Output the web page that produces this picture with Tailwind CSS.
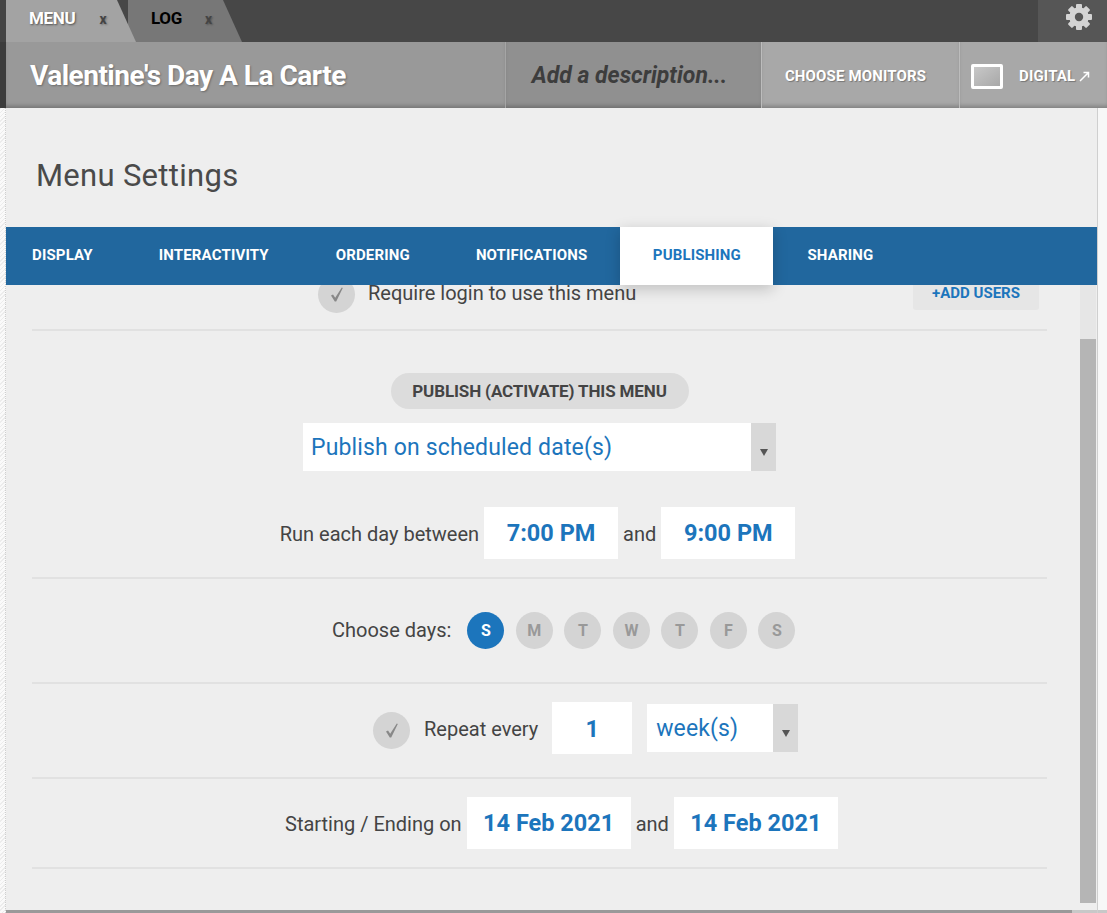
<!DOCTYPE html>
<html lang="en">
<head>
  <meta charset="UTF-8" />
  <title>Menu Settings</title>
  <script src="https://cdn.jsdelivr.net/npm/@tailwindcss/browser@4"></script>
</head>
<body class="bg-[#f7f7f7] font-['Roboto',sans-serif] overflow-hidden">
  <div class="w-[1107px] h-[913px] flex flex-col overflow-hidden">

    <!-- tab strip -->
    <div class="relative h-[42px] bg-[#474747] shrink-0 flex justify-end">
      <div class="absolute left-0 top-0 w-[6px] h-[42px] bg-[#444]"></div>
      <div class="absolute left-[128px] top-0 w-[114px] h-[42px] bg-[#777] [clip-path:polygon(0_0,95px_0,114px_42px,0_42px)] flex items-center pb-[4px] text-[17px] font-bold text-black">
        <span class="ml-[23px] tracking-[-0.3px]">LOG</span>
        <span class="ml-[23px] text-[14px] text-[#444] [text-shadow:1px_1px_2px_rgba(0,0,0,0.3)]">x</span>
      </div>
      <div class="absolute left-[6px] top-0 w-[130px] h-[42px] bg-[#a3a3a3] [clip-path:polygon(0_0,111px_0,130px_42px,0_42px)] flex items-center pb-[4px] text-[17px] font-bold text-white">
        <span class="ml-[23px] tracking-[-0.3px] [text-shadow:1px_1px_2px_rgba(0,0,0,0.5)]">MENU</span>
        <span class="ml-[24px] text-[14px] text-[#444] [text-shadow:1px_1px_2px_rgba(0,0,0,0.3)]">x</span>
      </div>
      <div class="w-[69px] bg-[#565656] flex items-center justify-center pb-[8px] pl-[13px]">
        <svg class="w-[28px] h-[28px]" viewBox="0 0 28 28" fill="#d4d4d4">
          <rect x="11" y="1" width="6" height="26" rx="1" />
          <rect x="11" y="1" width="6" height="26" rx="1" transform="rotate(45 14 14)" />
          <rect x="11" y="1" width="6" height="26" rx="1" transform="rotate(90 14 14)" />
          <rect x="11" y="1" width="6" height="26" rx="1" transform="rotate(135 14 14)" />
          <circle cx="14" cy="14" r="7" fill="none" stroke="#d4d4d4" stroke-width="5.5" />
          <circle cx="14" cy="14" r="4.2" fill="#565656" />
        </svg>
      </div>
    </div>

    <!-- menu header -->
    <div class="h-[66px] shrink-0 flex bg-[#3c3c3c] pl-[6px]">
      <div class="w-[499px] bg-[#999] shadow-[inset_0_-4px_4px_-2px_rgba(0,0,0,0.25)] flex items-center pl-[24px] pt-[1px] text-[28px] font-bold text-white tracking-[-0.5px] [text-shadow:1px_1px_2px_rgba(0,0,0,0.3)]">Valentine's Day A La Carte</div>
      <div class="w-[256px] bg-[#909090] border-l border-[#a5a5a5] shadow-[inset_0_-4px_4px_-2px_rgba(0,0,0,0.25)] flex items-center justify-center pr-[8px] pt-[2px] text-[23px] font-bold italic text-[#3d3d3d]">Add a description...</div>
      <div class="w-[198px] bg-[#a8a8a8] border-l border-[#bcbcbc] shadow-[inset_0_-4px_4px_-2px_rgba(0,0,0,0.25)] flex items-center justify-center pr-[10px] pt-[2px] text-[15px] font-bold text-white tracking-[0.15px] [text-shadow:1px_1px_1px_rgba(0,0,0,0.3)]">CHOOSE MONITORS</div>
      <div class="flex-1 bg-[#a8a8a8] border-l border-[#bcbcbc] shadow-[inset_0_-4px_4px_-2px_rgba(0,0,0,0.25)] flex items-center pl-[11px] pt-[2px] text-[15px] font-bold text-white tracking-[0.15px] [text-shadow:1px_1px_1px_rgba(0,0,0,0.3)]">
        <div class="w-[32px] h-[25px] border-[3px] border-white bg-gradient-to-br from-[#c8c8c8] to-[#a8a8a8] rounded-[2px] mr-[16px]"></div>
        <span>DIGITAL</span>
        <svg class="w-[11px] h-[11px] ml-[4px]" viewBox="0 0 11 11" fill="none" stroke="#fff" stroke-width="1.5"><path d="M1 10 L9.5 1.5 M4.5 1.5 H9.5 V6.5" /></svg>
      </div>
    </div>

    <!-- body -->
    <div class="flex-1 flex min-h-0">
      <div class="w-[6px] shrink-0 bg-[repeating-linear-gradient(135deg,#ececec_0_1px,#fafafa_1px_3px)] border-r border-dotted border-[#cfcfcf]"></div>

      <div class="w-[1091px] h-[805px] shrink-0 bg-[#eeeeee] flex flex-col">
        <h1 class="h-[119px] shrink-0 flex items-center pl-[30px] pt-[17px] text-[31px] text-[#4a4a4a] tracking-[0.3px]">Menu Settings</h1>

        <nav class="relative z-10 h-[58px] shrink-0 bg-[#21679e] flex items-center pb-[2px] text-[15px] font-bold text-white tracking-[0.15px]">
          <a class="ml-[26px]">DISPLAY</a>
          <a class="ml-[66px]">INTERACTIVITY</a>
          <a class="ml-[67px]">ORDERING</a>
          <a class="ml-[66px]">NOTIFICATIONS</a>
          <a class="ml-[33px] w-[153px] h-[58px] -mb-[2px] pb-[2px] bg-white text-[#1c75bc] flex items-center justify-center shadow-[0_4px_14px_rgba(0,0,0,0.2)]">PUBLISHING</a>
          <a class="ml-[34px]">SHARING</a>
        </nav>

        <div class="flex flex-1 min-h-0">
          <main class="w-[1074px] shrink-0 pl-[26px] pr-[33px] text-[20px] text-[#444]">
            <div class="h-[46px] border-b-2 border-[#e1e1e1] flex items-start justify-between">
              <div class="flex items-center ml-[286px] -mt-[9px]">
                <span class="w-[37px] h-[37px] rounded-full bg-[#d4d4d4] flex items-center justify-center">
                  <svg class="w-[14px] h-[15px]" viewBox="0 0 14 15" fill="#888"><path d="M1 8.5 L3 7.5 L5.2 10.8 L11.8 0.6 L12.8 1.1 L6.2 14.5 L4.8 14.5 Z" /></svg>
                </span>
                <span class="ml-[13px] mb-[4px]">Require login to use this menu</span>
              </div>
              <div class="w-[126px] h-[25px] bg-[#e6e6e6] rounded-b-[3px] mr-[8px] pb-[9px] flex items-center justify-center text-[15px] font-bold text-[#1c75bc]">+ADD USERS</div>
            </div>

            <div class="h-[248px] border-b-2 border-[#e1e1e1] flex flex-col items-center">
              <div class="mt-[42px] h-[36px] w-[298px] rounded-full bg-[#dcdcdc] flex items-center justify-center pt-[1px] text-[17px] font-bold text-[#444] tracking-[-0.13px]">PUBLISH (ACTIVATE) THIS MENU</div>
              <div class="mt-[14px] w-[473px] h-[48px] flex">
                <div class="flex-1 bg-white flex items-center pl-[8px] pt-[2px] text-[23px] text-[#1c75bc] tracking-[0.15px]">Publish on scheduled date(s)</div>
                <div class="w-[25px] bg-[#d8d8d8] flex items-center justify-center pt-[11px]">
                  <svg class="w-[8px] h-[7px]" viewBox="0 0 8 7" fill="#555"><path d="M0 0 H8 L4 7 Z" /></svg>
                </div>
              </div>
              <div class="mt-[36px] flex items-center ml-[-4px]">
                <span class="pt-[2px]">Run each day between</span>
                <div class="ml-[5px] w-[134px] h-[52px] pt-[2px] bg-white flex items-center justify-center text-[23.5px] font-bold text-[#1c75bc]">7:00 PM</div>
                <span class="ml-[5px] pt-[2px]">and</span>
                <div class="ml-[5px] w-[134px] h-[52px] pt-[2px] bg-white flex items-center justify-center text-[23.5px] font-bold text-[#1c75bc]">9:00 PM</div>
              </div>
            </div>

            <div class="h-[105px] border-b-2 border-[#e1e1e1] flex items-start pl-[300px] pt-[33px]">
              <span class="h-[37px] pb-[2px] flex items-center mr-[16px]">Choose days:</span>
              <div class="flex gap-[11.5px] text-[16px] font-bold text-[#999]">
                <span class="w-[37px] h-[37px] rounded-full bg-[#1c75bc] text-white flex items-center justify-center">S</span>
                <span class="w-[37px] h-[37px] rounded-full bg-[#d4d4d4] flex items-center justify-center">M</span>
                <span class="w-[37px] h-[37px] rounded-full bg-[#d4d4d4] flex items-center justify-center">T</span>
                <span class="w-[37px] h-[37px] rounded-full bg-[#d4d4d4] flex items-center justify-center">W</span>
                <span class="w-[37px] h-[37px] rounded-full bg-[#d4d4d4] flex items-center justify-center">T</span>
                <span class="w-[37px] h-[37px] rounded-full bg-[#d4d4d4] flex items-center justify-center">F</span>
                <span class="w-[37px] h-[37px] rounded-full bg-[#d4d4d4] flex items-center justify-center">S</span>
              </div>
            </div>

            <div class="h-[95px] border-b-2 border-[#e1e1e1] flex items-start pl-[341px] pt-[18px]">
              <span class="w-[37px] h-[37px] mt-[10px] rounded-full bg-[#d4d4d4] flex items-center justify-center">
                <svg class="w-[14px] h-[15px]" viewBox="0 0 14 15" fill="#888"><path d="M1 8.5 L3 7.5 L5.2 10.8 L11.8 0.6 L12.8 1.1 L6.2 14.5 L4.8 14.5 Z" /></svg>
              </span>
              <span class="ml-[14px] mt-[12px]">Repeat every</span>
              <div class="ml-[14px] w-[80px] h-[52px] pt-[3px] bg-white flex items-center justify-center text-[23.5px] font-bold text-[#1c75bc]">1</div>
              <div class="ml-[15px] mt-[2px] w-[151px] h-[48px] flex">
                <div class="flex-1 bg-white flex items-center pl-[9px] pt-[3px] text-[23px] text-[#1c75bc] tracking-[0.1px]">week(s)</div>
                <div class="w-[25px] bg-[#d8d8d8] flex items-center justify-center pt-[11px]">
                  <svg class="w-[8px] h-[7px]" viewBox="0 0 8 7" fill="#555"><path d="M0 0 H8 L4 7 Z" /></svg>
                </div>
              </div>
            </div>

            <div class="h-[90px] border-b-2 border-[#e1e1e1] flex items-start pl-[253px] pt-[18px]">
              <span class="h-[52px] pt-[2px] flex items-center">Starting / Ending on</span>
              <div class="ml-[5px] w-[164px] h-[52px] pt-[2px] bg-white flex items-center justify-center text-[23.5px] font-bold text-[#1c75bc]">14 Feb 2021</div>
              <span class="ml-[5px] h-[52px] pt-[2px] flex items-center">and</span>
              <div class="ml-[5px] w-[164px] h-[52px] pt-[2px] bg-white flex items-center justify-center text-[23.5px] font-bold text-[#1c75bc]">14 Feb 2021</div>
            </div>
          </main>

          <!-- scrollbar -->
          <div class="w-[16px] shrink-0 h-[618px] flex flex-col">
            <div class="h-[54px] bg-[#e6e6e6]"></div>
            <div class="flex-1 bg-[#b5b5b5]"></div>
          </div>
        </div>

        <div class="h-[3px] shrink-0 flex">
          <div class="w-[1066px] bg-[#999]"></div>
          <div class="flex-1 bg-[#c8c8c8]"></div>
        </div>
      </div>

      <div class="flex-1 flex flex-col justify-end bg-[#f7f7f7] border-l border-[#cfcfcf]">
        <div class="h-[3px] bg-[#c8c8c8]"></div>
      </div>
    </div>
  </div>
</body>
</html>
